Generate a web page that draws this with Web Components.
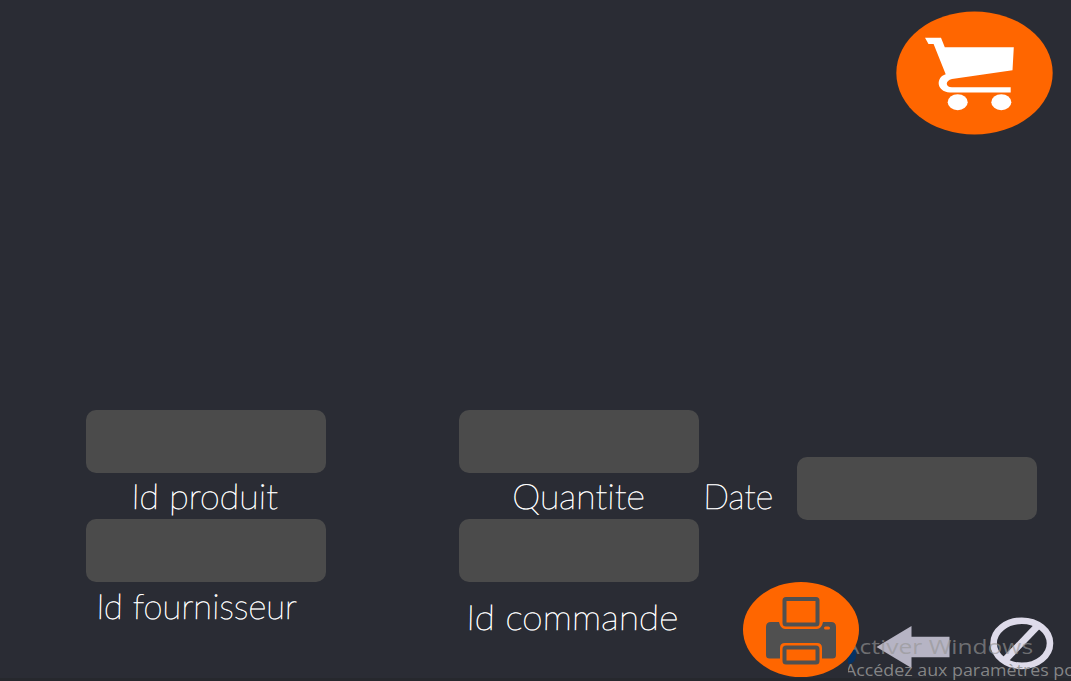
<!DOCTYPE html>
<html lang="fr">
<head>
<meta charset="utf-8">
<title>Commande</title>
<style>
html,body{margin:0;height:100%;overflow:hidden;background:#2a2c34}
</style>
</head>
<body>
<order-page></order-page>
<script>
const define = (name, html, ready) => customElements.define(name, class extends HTMLElement {
  connectedCallback() {
    if (this.shadowRoot) return;
    this.attachShadow({ mode: 'open' }).innerHTML = html;
    if (ready) ready(this, this.shadowRoot);
  }
});

/* Text stretched to the width given in its "width" attribute. */
define('fit-text', `<style>
:host{display:block;white-space:nowrap;height:44px;line-height:44px;font-variant-ligatures:none}
span{display:inline-block;transform-origin:0 75%}
</style><span><slot></slot></span>`, (el, root) => {
  const s = root.querySelector('span');
  el.style.width = el.getAttribute('width') + 'px';
  const skew = el.getAttribute('skew') || 0;
  s.style.transform = `scaleX(${el.getAttribute('width') / s.offsetWidth}) skewX(${skew}deg)`;
});

define('form-field', `<style>
:host{display:block}
div{width:240px;height:63px;border-radius:10px;background:#4b4b4b}
</style><div role="textbox"></div><slot></slot>`);

define('cart-logo', `<style>:host{display:block;width:158px;height:125px}svg{display:block}</style>
<svg width="158" height="125" viewBox="895 11 158 125">
<ellipse cx="974.5" cy="73" rx="78.2" ry="61.5" fill="#f60"/>
<path fill="#fff" d="M925 37.7H941L944.8 47.3H1013.8L1012.5 70.2L952 79C945 80.500 945 87.3 952 87.3H1010.7V92.6H950C935.500 91.500 936 77 945.7 74.300L933.600 44H928.5Z"/>
<ellipse cx="957.7" cy="102.200" rx="10" ry="8" fill="#fff"/><ellipse cx="1001.300" cy="102.200" rx="10" ry="8" fill="#fff"/>
</svg>`);

define('print-button', `<style>:host{display:block;width:116px;height:95px;position:relative;z-index:2}svg{display:block}</style>
<svg width="116" height="95" viewBox="743 582 116 95">
<ellipse cx="801" cy="629.5" rx="58" ry="47.500" fill="#f60"/>
<path fill="#505050" d="M771 622H779Q780.500 629 785 629H817Q821.500 629 823 622H831Q836 622 836 627V655Q836 658.500 832.500 658.500H822V648Q822 643 817 643H785Q780 643 780 648V658.500H769.500Q766 658.500 766 655V627Q766 622 771 622Z"/>
<rect x="784.500" y="599" width="33" height="25.500" rx="1.500" fill="#f60" stroke="#505050" stroke-width="4"/>
<rect x="784.500" y="647.500" width="33" height="15" rx="1.500" fill="#f60" stroke="#505050" stroke-width="4"/>
<rect x="824" y="626.500" width="6" height="3" rx="1.500" fill="#f60"/>
</svg>`);

define('back-button', `<style>:host{display:block;width:74px;height:44px}svg{display:block}</style>
<svg width="74" height="44" viewBox="876 625 74 44"><path fill="#b6b4c4" d="M876.500 647L911.500 626V636.700H949.500V657.300H911.500V668Z"/></svg>`);

define('cancel-button', `<style>:host{display:block;width:64px;height:54px}svg{display:block}</style>
<svg width="64" height="54" viewBox="990 616 64 54" fill="none" stroke="#dedbea">
<ellipse cx="1021.800" cy="643.300" rx="28.200" ry="22.600" stroke-width="6.600"/>
<path stroke-width="7" d="M1038 625.500L1005 660"/></svg>`);

define('windows-notice', `<style>
:host{position:absolute;left:843px;top:630px;width:228px;height:51px;overflow:hidden;color:rgba(150,150,150,.65);font-family:"Open Sans","Noto Sans",sans-serif;font-weight:400;z-index:1}
i{position:absolute;left:5px;top:19px;width:8px;height:15px;background:#063263;border-radius:0 0 8px 0}
fit-text{position:absolute;left:1px;top:-5px;font-size:20px}
.sub{left:3px;top:17.500px;font-size:15.500px;color:rgba(145,145,145,.9)}
.clip{position:absolute;left:5px;top:0;width:223px;height:51px;overflow:hidden}
</style><i></i><fit-text width="189">Activer Windows</fit-text>
<div class="clip"><fit-text class="sub" style="left:-3px" width="230">Accédez aux paramètres po</fit-text></div>`);

define('order-page', `<style>
:host{display:flex;flex-direction:column;position:relative;box-sizing:border-box;width:1071px;height:681px;overflow:hidden;background:#2a2c34;box-shadow:inset 0 -3px #26282d;color:#fff;font:200 35px/44px Lato,"Open Sans",sans-serif}
header{display:flex;justify-content:flex-end;padding:11px 18px 0 0;height:410px;flex:none;box-sizing:border-box}
main{display:grid;grid-template-columns:240px 240px 1fr;column-gap:133px;padding-left:86px}
.col{display:flex;flex-direction:column}
.col form-field{height:109px}
main fit-text{-webkit-text-stroke:.65px #fff}
.right{margin-left:-128px}
.date{display:flex;padding-top:47px;height:63px}
.date fit-text{margin:15.500px 24px 0 -1px}
.actions{display:flex;padding:62px 0 0 39px}
back-button{margin:43px 40px 0 17px}
cancel-button{margin-top:34px}
</style>
<header><cart-logo></cart-logo></header>
<main>
<section class="col">
<form-field><fit-text width="147" skew="-1" style="margin:-.5px 0 0 45px">Id produit</fit-text></form-field>
<form-field><fit-text width="201" skew="-1" style="margin:.5px 0 0 10px">Id fournisseur</fit-text></form-field>
</section>
<section class="col">
<form-field><fit-text width="133" skew="-1" style="margin:-.5px 0 0 53px">Quantite</fit-text></form-field>
<form-field><fit-text width="212" skew="-1" style="margin:11.500px 0 0 7px">Id commande</fit-text></form-field>
</section>
<section class="right">
<div class="date"><fit-text width="70" skew="-1">Date</fit-text><form-field></form-field></div>
<div class="actions"><print-button></print-button><back-button></back-button><cancel-button></cancel-button></div>
</section>
</main>
<windows-notice></windows-notice>`);
</script>
</body>
</html>
